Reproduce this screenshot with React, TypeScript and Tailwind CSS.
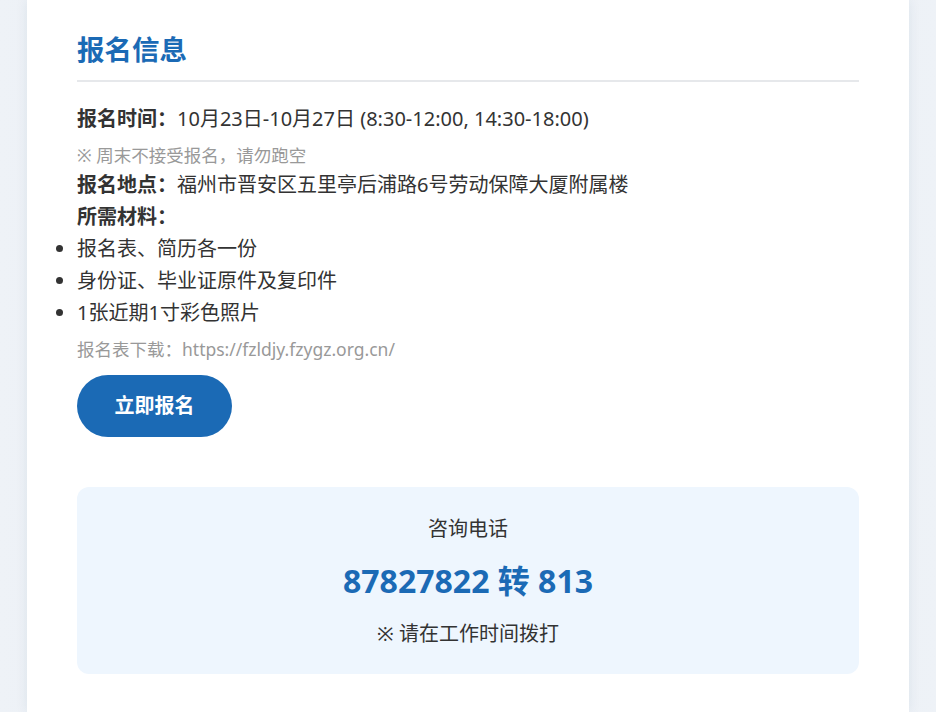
const font = { fontFamily: '"Noto Sans", "Noto Sans CJK SC", sans-serif' };

const materials = ["报名表、简历各一份", "身份证、毕业证原件及复印件", "1张近期1寸彩色照片"];

export default function App() {
  return (
    <div
      className="min-h-[712px] bg-gradient-to-r from-[#eef2f7] via-[#e4eaf1] to-[#eef2f7] px-[27px]"
      style={font}
    >
      <div className="min-h-[712px] bg-white px-[50px] pt-[32px] pb-[38px] shadow-[0_0_12px_rgba(30,60,100,0.08)]">
        <h2 className="border-b-2 border-[#e6e8eb] pb-[12px] text-[27.5px] font-bold leading-[36px] text-[#1b6ab5]">
          报名信息
        </h2>

        <div className="mt-[21px] text-[20px] leading-[32px] text-[#333]">
          <p>
            <strong className="font-bold">报名时间：</strong>10月23日-10月27日 (8:30-12:00, 14:30-18:00)
          </p>
          <p className="mt-[6px] text-[17.5px] leading-[28px] text-[#999]">※ 周末不接受报名，请勿跑空</p>
          <p>
            <strong className="font-bold">报名地点：</strong>福州市晋安区五里亭后浦路6号劳动保障大厦附属楼
          </p>
          <p>
            <strong className="font-bold">所需材料：</strong>
          </p>
          <ul className="list-disc">
            {materials.map((m) => (
              <li key={m}>{m}</li>
            ))}
          </ul>
          <p className="mt-[6px] text-[17.5px] leading-[28px] text-[#999]">报名表下载：https://fzldjy.fzygz.org.cn/</p>
          <button className="mt-[12px] flex h-[62px] w-[155px] items-center justify-center rounded-full bg-[#1b6ab5] text-[20px] font-bold text-white">
            立即报名
          </button>
        </div>

        <div className="mt-[50px] flex flex-col items-center rounded-[12px] bg-[#eef6fe] pt-[26px] pb-[24px] text-[#333]">
          <p className="text-[20px] leading-[32px]">咨询电话</p>
          <p className="mt-[14px] text-[32px] font-bold leading-[44px] text-[#1b6ab5]">87827822 转 813</p>
          <p className="mt-[15px] text-[20px] leading-[32px]">※ 请在工作时间拨打</p>
        </div>
      </div>
    </div>
  );
}
